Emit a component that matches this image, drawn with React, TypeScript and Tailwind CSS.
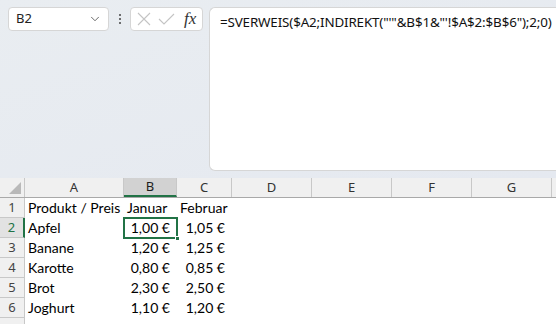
import { ChevronDown } from 'lucide-react';

const cols = [
  { id: 'A', w: 'w-[99px]' },
  { id: 'B', w: 'w-[53px]' },
  { id: 'C', w: 'w-[55px]' },
  { id: 'D', w: 'w-[80px]' },
  { id: 'E', w: 'w-[80px]' },
  { id: 'F', w: 'w-[80px]' },
  { id: 'G', w: 'w-[80px]' },
  { id: '', w: 'w-[80px]' },
];

const rows = [
  ['Produkt / Preis', 'Januar', 'Februar'],
  ['Apfel', '1,00 €', '1,05 €'],
  ['Banane', '1,20 €', '1,25 €'],
  ['Karotte', '0,80 €', '0,85 €'],
  ['Brot', '2,30 €', '2,50 €'],
  ['Joghurt', '1,10 €', '1,20 €'],
  ['', '', ''],
];

const FormulaBar = () => (
  <div className="flex h-[178px] bg-gradient-to-br from-[#e9edf1] to-[#e5e9f0] pt-[7px]">
    <div className="ml-[8px] flex h-[24px] w-[101px] shrink-0 items-center justify-between rounded-[4px] border border-[#d6d6d6] bg-white pl-[7px] pr-[6px]">
      <span className="text-[13px] text-[#222]">B2</span>
      <ChevronDown size={14} strokeWidth={1.5} color="#555" />
    </div>
    <div className="flex h-[24px] w-[21px] shrink-0 flex-col items-center justify-center gap-[2px]">
      <span className="h-[2px] w-[2px] rounded-full bg-[#444]" />
      <span className="h-[2px] w-[2px] rounded-full bg-[#444]" />
      <span className="h-[2px] w-[2px] rounded-full bg-[#444]" />
    </div>
    <div className="flex h-[24px] w-[73px] shrink-0 items-center rounded-[4px] border border-[#d6d6d6] bg-white pl-[6px]">
      <svg width="14" height="14" viewBox="0 0 14 14" fill="none" stroke="#c4c4c4" strokeWidth="1.1">
        <path d="M1 1 L13 13 M13 1 L1 13" />
      </svg>
      <svg width="17" height="12" viewBox="0 0 17 12" fill="none" stroke="#c4c4c4" strokeWidth="1.1" className="ml-[7px]">
        <path d="M1 6 L6 11 L16 1" />
      </svg>
      <span className="ml-[9px] font-['Liberation_Serif',serif] text-[17px] italic text-[#333]">fx</span>
    </div>
    <div className="ml-[6px] h-[164px] min-w-0 flex-1 overflow-hidden rounded-l-[6px] border border-r-0 border-[#d6d6d6] bg-white pl-[10px] pt-[1px]">
      <span className="whitespace-nowrap text-[13.4px] tracking-[-0.15px] text-[#111]">
        =SVERWEIS($A2;INDIREKT("'"&B$1&"'!$A$2:$B$6");2;0)
      </span>
    </div>
  </div>
);

const cell = "font-['Lato',sans-serif] text-[14px] leading-[20px] text-black whitespace-nowrap";

const App = () => {
  return (
    <div className="h-[324px] w-[556px] overflow-hidden bg-white font-['Noto_Sans',sans-serif]">
      <FormulaBar />
      <div className="flex h-[20px] border-b border-[#a9a9a9] bg-[#f0f0f0]">
        <div className="relative w-[25px] shrink-0 border-r border-[#c8c8c8]">
          <div className="absolute bottom-[3px] right-[3px] h-0 w-0 border-b-[12px] border-l-[12px] border-b-[#b9b9b9] border-l-transparent" />
        </div>
        {cols.map((c, idx) => (
          <div
            key={idx}
            className={`${c.w} flex shrink-0 items-center justify-center border-r border-[#c8c8c8] text-[13px] ${
              c.id === 'B' ? 'border-b-2 border-b-[#217346] bg-[#d2d2d2] text-[#1d1d1d]' : 'text-[#333]'
            }`}
          >
            {c.id}
          </div>
        ))}
      </div>
      {rows.map((r, i) => (
        <div key={i} className="flex h-[20px]">
          <div
            className={`flex w-[25px] shrink-0 items-center justify-center border-b border-r text-[13px] ${
              i === 1
                ? 'border-b-[#c8c8c8] border-r-2 border-r-[#217346] bg-[#e2e2e2] text-[#217346]'
                : 'border-[#c8c8c8] bg-[#f0f0f0] text-[#444]'
            }`}
          >
            {i < 6 ? i + 1 : ''}
          </div>
          <div className={`w-[99px] shrink-0 pl-[3px] ${cell}`}>{r[0]}</div>
          <div className={`relative w-[53px] shrink-0 ${cell} ${i === 0 ? 'pl-[3px] text-left' : 'pr-[7px] text-right'}`}>
            {r[1]}
            {i === 1 && (
              <>
                <div className="absolute -left-[1px] -top-[1px] h-[22px] w-[55px] border-2 border-[#217346]" />
                <div className="absolute -bottom-[3px] -right-[3px] h-[5px] w-[5px] border border-white bg-[#217346]" />
              </>
            )}
          </div>
          <div className={`w-[55px] shrink-0 ${cell} ${i === 0 ? 'pl-[3px] text-left' : 'pr-[7px] text-right'}`}>
            {r[2]}
          </div>
        </div>
      ))}
    </div>
  );
};

export default App;
